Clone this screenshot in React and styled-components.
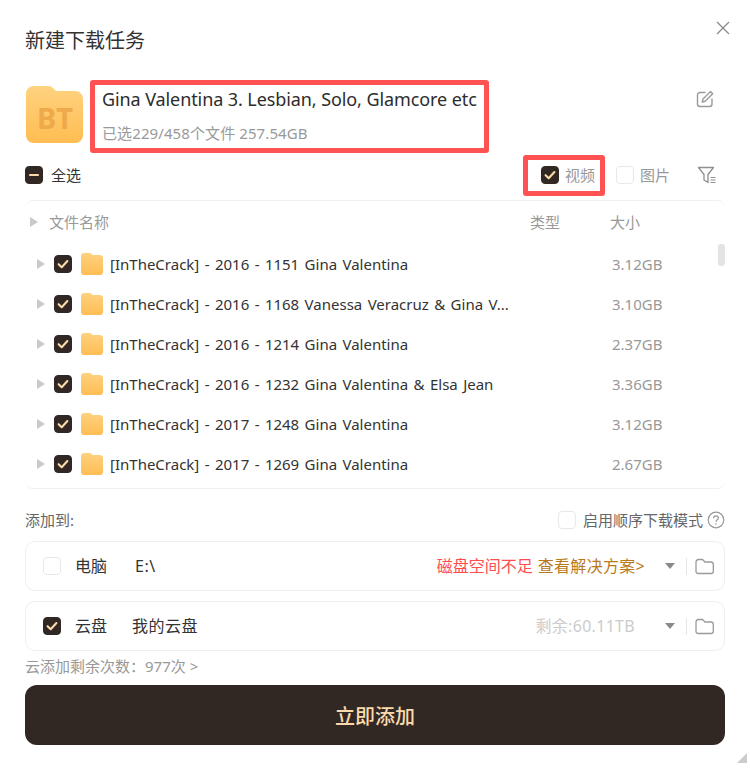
import React from "react";
import styled, { createGlobalStyle } from "styled-components";

const Global = createGlobalStyle`
  html, body { margin: 0; padding: 0; background: #fff; }
  body { font-family: "Noto Sans", "Noto Sans CJK SC", sans-serif; }
  * { box-sizing: border-box; }
`;
const Page = styled.div`
  position: relative;
  width: 750px;
  height: 769px;
  padding: 0 25px;
  background: #fff;
  overflow: hidden;
  color: #333;
  line-height: 20px;
`;
const TitleBar = styled.div`
  height: 80px;
  padding-top: 26px;
  font-size: 20px;
  line-height: 30px;
  color: #333;
`;
const CloseBtn = styled.svg`
  position: absolute;
  top: 21px;
  right: 20px;
  width: 14px;
  height: 14px;
`;
const HeaderRow = styled.div`
  height: 73px;
  display: flex;
  align-items: center;
  position: relative;
`;
const BigFolder = styled.svg`
  width: 57px;
  height: 57px;
  margin: 0 7px 0 1px;
  flex: none;
`;
const InfoBox = styled.div`
  width: 399px;
  height: 73px;
  border: 5px solid #ff5252;
  border-radius: 3px;
  padding: 1px 0 0 7px;
`;
const TaskName = styled.div`
  font-size: 18px;
  letter-spacing: -0.09px;
  line-height: 26px;
  white-space: nowrap;
  color: #2c2c2c;
  height: 35px;
`;
const TaskMeta = styled.div`
  font-size: 15px;
  letter-spacing: 0.1px;
  line-height: 20px;
  color: #999;
  margin-top: 2px;
`;
const EditIcon = styled.svg`
  position: absolute;
  right: 11px;
  top: 10px;
  width: 18px;
  height: 18px;
`;
const FilterRow = styled.div`
  height: 47px;
  display: flex;
  align-items: center;
  justify-content: space-between;
  padding-bottom: 3px;
`;
const Check = styled.span`
  width: 18px;
  height: 18px;
  flex: none;
  border-radius: 4px;
  display: inline-flex;
  align-items: center;
  justify-content: center;
  background: ${(p) => (p.$on ? "#312824" : "#fff")};
  border: 1px solid ${(p) => (p.$on ? "#312824" : "#e8e8e8")};
`;
const Mark = styled.svg`
  width: 12px;
  height: 12px;
`;
const Tick = ({ on = true, minus }) => (
  <Check $on={on}>
    {on && (
      <Mark viewBox="0 0 12 12">
        {minus ? (
          <path d="M2 6h8" stroke="#fbd9ab" strokeWidth="2.2" strokeLinecap="round" fill="none" />
        ) : (
          <path d="M1.600 6.200 4.700 9.200 10.400 3" stroke="#fbd9ab" strokeWidth="2.100" strokeLinecap="round" strokeLinejoin="round" fill="none" />
        )}
      </Mark>
    )}
  </Check>
);
const Labeled = styled.label`
  display: flex;
  align-items: center;
  gap: ${(p) => p.$gap || 6}px;
  font-size: 15px;
  color: ${(p) => p.$color || "#333"};
`;
const FilterGroup = styled.div`
  display: flex;
  align-items: center;
  margin-right: 8px;
`;
const RedBox = styled.div`
  width: 82px;
  height: 41px;
  border: 5px solid #ff5252;
  border-radius: 3px;
  display: flex;
  align-items: center;
  padding-left: 13px;
  margin-right: 11px;
`;
const FunnelIcon = styled.svg`
  width: 20px;
  height: 20px;
  margin-left: 27px;
`;
const Table = styled.div`
  position: relative;
  height: 289px;
  border-top: 1px solid #f0f0f0;
  border-bottom: 1px solid #f0f0f0;
  border-radius: 8px;
`;
const HeadRow = styled.div`
  height: 43px;
  padding: 0 0 2px 5px;
  display: flex;
  align-items: center;
  font-size: 15px;
  color: #999;
`;
const Arrow = styled.span`
  width: 0;
  height: 0;
  flex: none;
  border-left: 8px solid #cacaca;
  border-top: 5px solid transparent;
  border-bottom: 5px solid transparent;
`;
const HeadName = styled.span`
  margin-left: 11px;
  width: 481px;
`;
const HeadType = styled.span`
  width: 80px;
`;
const Row = styled.div`
  height: 40px;
  display: flex;
  align-items: center;
  padding-left: 12px;
`;
const ArrowGap = styled.span`
  width: 9px;
`;
const RowFolder = styled.svg`
  width: 22px;
  height: 22px;
  margin-left: 9px;
  flex: none;
`;
const RowName = styled.span`
  margin-left: 7px;
  width: 502px;
  font-size: 15px;
  word-spacing: 1.5px;
  color: #333;
  white-space: nowrap;
  overflow: hidden;
`;
const RowSize = styled.span`
  font-size: 15px;
  color: #999;
`;
const Scroll = styled.div`
  position: absolute;
  right: 0;
  top: 43px;
  width: 7px;
  height: 22px;
  border-radius: 3px;
  background: #e4e4e4;
`;
const AddHead = styled.div`
  height: 52px;
  padding-top: 10px;
  display: flex;
  align-items: center;
  justify-content: space-between;
  font-size: 15px;
  color: #666;
`;
const ModeLabel = styled.div`
  display: flex;
  align-items: center;
  gap: 7px;
  font-size: 15px;
  color: #666;
`;
const HelpIcon = styled.svg`
  width: 18px;
  height: 18px;
  margin-left: -3px;
`;
const Card = styled.div`
  height: 50px;
  margin-bottom: 10px;
  border: 1px solid #eee;
  border-radius: 10px;
  display: flex;
  align-items: center;
  padding: 0 10px 0 17px;
  font-size: 16px;
  color: #333;
`;
const CardName = styled.span`
  margin-left: 14px;
  width: ${(p) => p.$w}px;
`;
const CardPath = styled.span`
  flex: 1;
  letter-spacing: 0.5px;
`;
const Warn = styled.span`
  color: #ff4d4f;
`;
const Solve = styled.span`
  color: #b97a1d;
  margin-left: 5px;
  letter-spacing: 0.3px;
`;
const Free = styled.span`
  color: #ccc;
  letter-spacing: 0.3px;
`;
const Caret = styled.span`
  width: 0;
  height: 0;
  margin-left: ${(p) => p.$gap}px;
  border-top: 6px solid #8a8a8a;
  border-left: 5px solid transparent;
  border-right: 5px solid transparent;
`;
const Sep = styled.span`
  width: 1px;
  height: 17px;
  background: #e6e6e6;
  margin: 0 8px 0 11px;
`;
const OpenIcon = styled.svg`
  width: 19px;
  height: 17px;
`;
const Quota = styled.div`
  font-size: 15px;
  line-height: 20px;
  color: #999;
  margin-top: -5px;
  height: 29px;
`;
const AddBtn = styled.button`
  display: block;
  width: 700px;
  height: 60px;
  border: 0;
  padding: 3px 0 0;
  border-radius: 12px;
  background: #312824;
  color: #fbd9ab;
  font: 500 20px/30px "Noto Sans", "Noto Sans CJK SC", sans-serif;
`;
const Grip = styled.svg`
  position: absolute;
  right: 3px;
  bottom: 6px;
  width: 10px;
  height: 10px;
`;
const BTMark = styled.span`
  position: absolute;
  left: 12px;
  top: 12px;
  font: 700 29px/40px "Noto Sans", sans-serif;
  color: #eda94a;
`;
const BigWrap = styled.span`
  position: relative;
  display: inline-flex;
  margin-top: -4px;
`;

const FolderGlyph = ({ id, as: C }) => (
  <C viewBox="0 0 57 57">
    <defs>
      <linearGradient id={id} x1="0" y1="0" x2="0" y2="1">
        <stop offset="0" stopColor="#ffd27f" />
        <stop offset="1" stopColor="#ffbd52" />
      </linearGradient>
    </defs>
    <path d="M8 0h14c3 0 4 1 6 3l2 2h19c4.500 0 8 3.500 8 8v36c0 4.500-3.500 8-8 8H8c-4.500 0-8-3.500-8-8V8c0-4.500 3.500-8 8-8z" fill={`url(#${id})`} />
  </C>
);

const rows = [
  ["[InTheCrack] - 2016 - 1151 Gina Valentina", "3.12GB"],
  ["[InTheCrack] - 2016 - 1168 Vanessa Veracruz & Gina V...", "3.10GB"],
  ["[InTheCrack] - 2016 - 1214 Gina Valentina", "2.37GB"],
  ["[InTheCrack] - 2016 - 1232 Gina Valentina & Elsa Jean", "3.36GB"],
  ["[InTheCrack] - 2017 - 1248 Gina Valentina", "3.12GB"],
  ["[InTheCrack] - 2017 - 1269 Gina Valentina", "2.67GB"],
];

const FolderOpen = () => (
  <OpenIcon viewBox="0 0 19 17">
    <path d="M1 4c0-1.600 1-2.500 2.500-2.500h4L10 4h6c1.400 0 2.300 1 2.300 2.300v7.200c0 1.300-1 2-2.300 2H3.300c-1.300 0-2.300-.8-2.300-2z" fill="none" stroke="#9a9a9a" strokeWidth="1.300" />
  </OpenIcon>
);

export default function App() {
  return (
    <Page>
      <Global />
      <TitleBar>新建下载任务</TitleBar>
      <CloseBtn viewBox="0 0 14 14">
        <path d="M1 1l12 12M13 1 1 13" stroke="#8a8a8a" strokeWidth="1.300" fill="none" />
      </CloseBtn>
      <HeaderRow>
        <BigWrap>
          <FolderGlyph id="big" as={BigFolder} />
          <BTMark>BT</BTMark>
        </BigWrap>
        <InfoBox>
          <TaskName>Gina Valentina 3. Lesbian, Solo, Glamcore etc</TaskName>
          <TaskMeta>已选229/458个文件 257.54GB</TaskMeta>
        </InfoBox>
        <EditIcon viewBox="0 0 18 18">
          <path d="M9 2.500H4c-1.500 0-2.500 1-2.500 2.500v9c0 1.500 1 2.500 2.500 2.500h9.500c1.500 0 2.500-1 2.500-2.500V9" fill="none" stroke="#9a9a9a" strokeWidth="1.400" strokeLinecap="round" />
          <path d="M14.500 1.500l2.200 2.200-7.500 7.500-3 .8.800-3z" fill="none" stroke="#9a9a9a" strokeWidth="1.400" strokeLinejoin="round" />
        </EditIcon>
      </HeaderRow>
      <FilterRow>
        <Labeled $gap={8}><Tick minus />全选</Labeled>
        <FilterGroup>
          <RedBox>
            <Labeled $color="#999"><Tick />视频</Labeled>
          </RedBox>
          <Labeled $color="#999"><Tick on={false} />图片</Labeled>
          <FunnelIcon viewBox="0 0 20 20">
            <path d="M1.500 2.500h15l-5.500 7v8l-4-2.500V9.500z" fill="none" stroke="#8f8f8f" strokeWidth="1.300" strokeLinejoin="round" />
            <path d="M13.500 12.500h5M13.500 15h5M13.500 17.500h5" stroke="#8f8f8f" strokeWidth="1.100" fill="none" />
          </FunnelIcon>
        </FilterGroup>
      </FilterRow>
      <Table>
        <HeadRow>
          <Arrow />
          <HeadName>文件名称</HeadName>
          <HeadType>类型</HeadType>
          <span>大小</span>
        </HeadRow>
        {rows.map(([n, s], i) => (
          <Row key={i}>
            <Arrow />
            <ArrowGap />
            <Tick />
            <FolderGlyph id={`f${i}`} as={RowFolder} />
            <RowName>{n}</RowName>
            <RowSize>{s}</RowSize>
          </Row>
        ))}
        <Scroll />
      </Table>
      <AddHead>
        添加到:
        <ModeLabel>
          <Tick on={false} />
          启用顺序下载模式
          <HelpIcon viewBox="0 0 18 18">
            <circle cx="9" cy="9" r="7.800" fill="none" stroke="#999" strokeWidth="1.200" />
            <path d="M6.600 7.200c0-1.500 1-2.400 2.400-2.400s2.400.9 2.400 2.200c0 1.800-2.400 1.800-2.400 3.700" fill="none" stroke="#999" strokeWidth="1.200" />
            <circle cx="9" cy="13" r=".8" fill="#999" />
          </HelpIcon>
        </ModeLabel>
      </AddHead>
      <Card>
        <Tick on={false} />
        <CardName $w={60}>电脑</CardName>
        <CardPath>E:\</CardPath>
        <Warn>磁盘空间不足</Warn>
        <Solve>查看解决方案&gt;</Solve>
        <Caret $gap={20} />
        <Sep />
        <FolderOpen />
      </Card>
      <Card>
        <Tick />
        <CardName $w={57}>云盘</CardName>
        <CardPath>我的云盘</CardPath>
        <Free>剩余:60.11TB</Free>
        <Caret $gap={30} />
        <Sep />
        <FolderOpen />
      </Card>
      <Quota>云添加剩余次数：977次 &gt;</Quota>
      <AddBtn>立即添加</AddBtn>
      <Grip viewBox="0 0 10 10"><path d="M10 0v10H0z" fill="#ccc" /></Grip>
    </Page>
  );
}
